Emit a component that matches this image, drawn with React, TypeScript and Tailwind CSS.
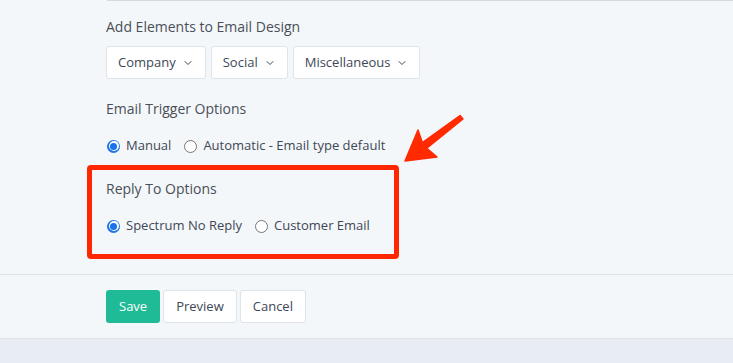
import { ChevronDown } from "lucide-react";

function Dropdown({ label }: { label: string }) {
  return (
    <button className="flex h-[33px] items-center gap-[6px] rounded-[3px] border border-[#dfe4ea] bg-white px-[11px] text-[13px] text-[#3e4756]">
      {label}
      <ChevronDown size={12} strokeWidth={2} className="text-[#3e4756]" />
    </button>
  );
}

function Radio({ checked, label }: { checked?: boolean; label: string }) {
  return (
    <label className="flex items-center gap-[6px] text-[13px] text-[#3e4756]">
      {checked ? (
        <span className="flex h-[13px] w-[13px] items-center justify-center rounded-full bg-[#1a73e8]">
          <span className="flex h-[10px] w-[10px] items-center justify-center rounded-full bg-white">
            <span className="h-[7px] w-[7px] rounded-full bg-[#1a73e8]" />
          </span>
        </span>
      ) : (
        <span className="h-[13px] w-[13px] rounded-full border border-[#767676] bg-white" />
      )}
      {label}
    </label>
  );
}

export default function App() {
  return (
    <div
      className="relative h-[363px] w-full overflow-hidden bg-[#e8edf3]"
      style={{ fontFamily: '"Open Sans", "Noto Sans", sans-serif' }}
    >
      <div className="bg-[#f4f7fa]">
        <div className="ml-[107px] h-px bg-[#d3dae2]" />

        {/* Form body */}
        <div className="px-[106px]">
          <div className="mt-[16px] text-[14px] leading-[20px] text-[#4a4f57]">
            Add Elements to Email Design
          </div>
          <div className="mt-[9px] flex gap-[5px]">
            <Dropdown label="Company" />
            <Dropdown label="Social" />
            <Dropdown label="Miscellaneous" />
          </div>

          <div className="mt-[20px] text-[14px] leading-[20px] text-[#4a4f57]">
            Email Trigger Options
          </div>
          <div className="mt-[17px] flex h-[20px] items-center gap-[13px] pl-[1px]">
            <Radio checked label="Manual" />
            <Radio label="Automatic - Email type default" />
          </div>

          <div className="mt-[23px] text-[14px] leading-[20px] text-[#4a4f57]">
            Reply To Options
          </div>
          <div className="mt-[17px] flex h-[20px] items-center gap-[13px] pl-[1px]">
            <Radio checked label="Spectrum No Reply" />
            <Radio label="Customer Email" />
          </div>
        </div>

        {/* Footer actions */}
        <div className="mt-[38px] border-t border-[#dde2e8] px-[106px] pt-[15px] pb-[15px]">
          <div className="flex gap-[3px]">
            <button className="h-[33px] rounded-[3px] bg-[#1fba96] px-[13px] text-[13px] text-white">
              Save
            </button>
            <button className="h-[33px] rounded-[3px] border border-[#dfe4ea] bg-white px-[12px] text-[13px] text-[#3e4756]">
              Preview
            </button>
            <button className="h-[33px] rounded-[3px] border border-[#dfe4ea] bg-white px-[12px] text-[13px] text-[#3e4756]">
              Cancel
            </button>
          </div>
        </div>
      </div>
      <div className="border-t border-[#dde2e8]" />

      {/* Annotation overlay */}
      <div className="absolute left-[87px] top-[165px] h-[94px] w-[312px] rounded-[4px] border-[5px] border-[#ff2600]" />
      <svg className="absolute left-0 top-0" width="733" height="363" viewBox="0 0 733 363">
        <polygon
          points="405,161 418,130 422.4,142.7 460,115.5 463,119 426.8,148.2 437,157"
          fill="#ff2a00"
          stroke="#ff2a00"
          strokeWidth="1.5"
          strokeLinejoin="round"
        />
      </svg>
    </div>
  );
}
